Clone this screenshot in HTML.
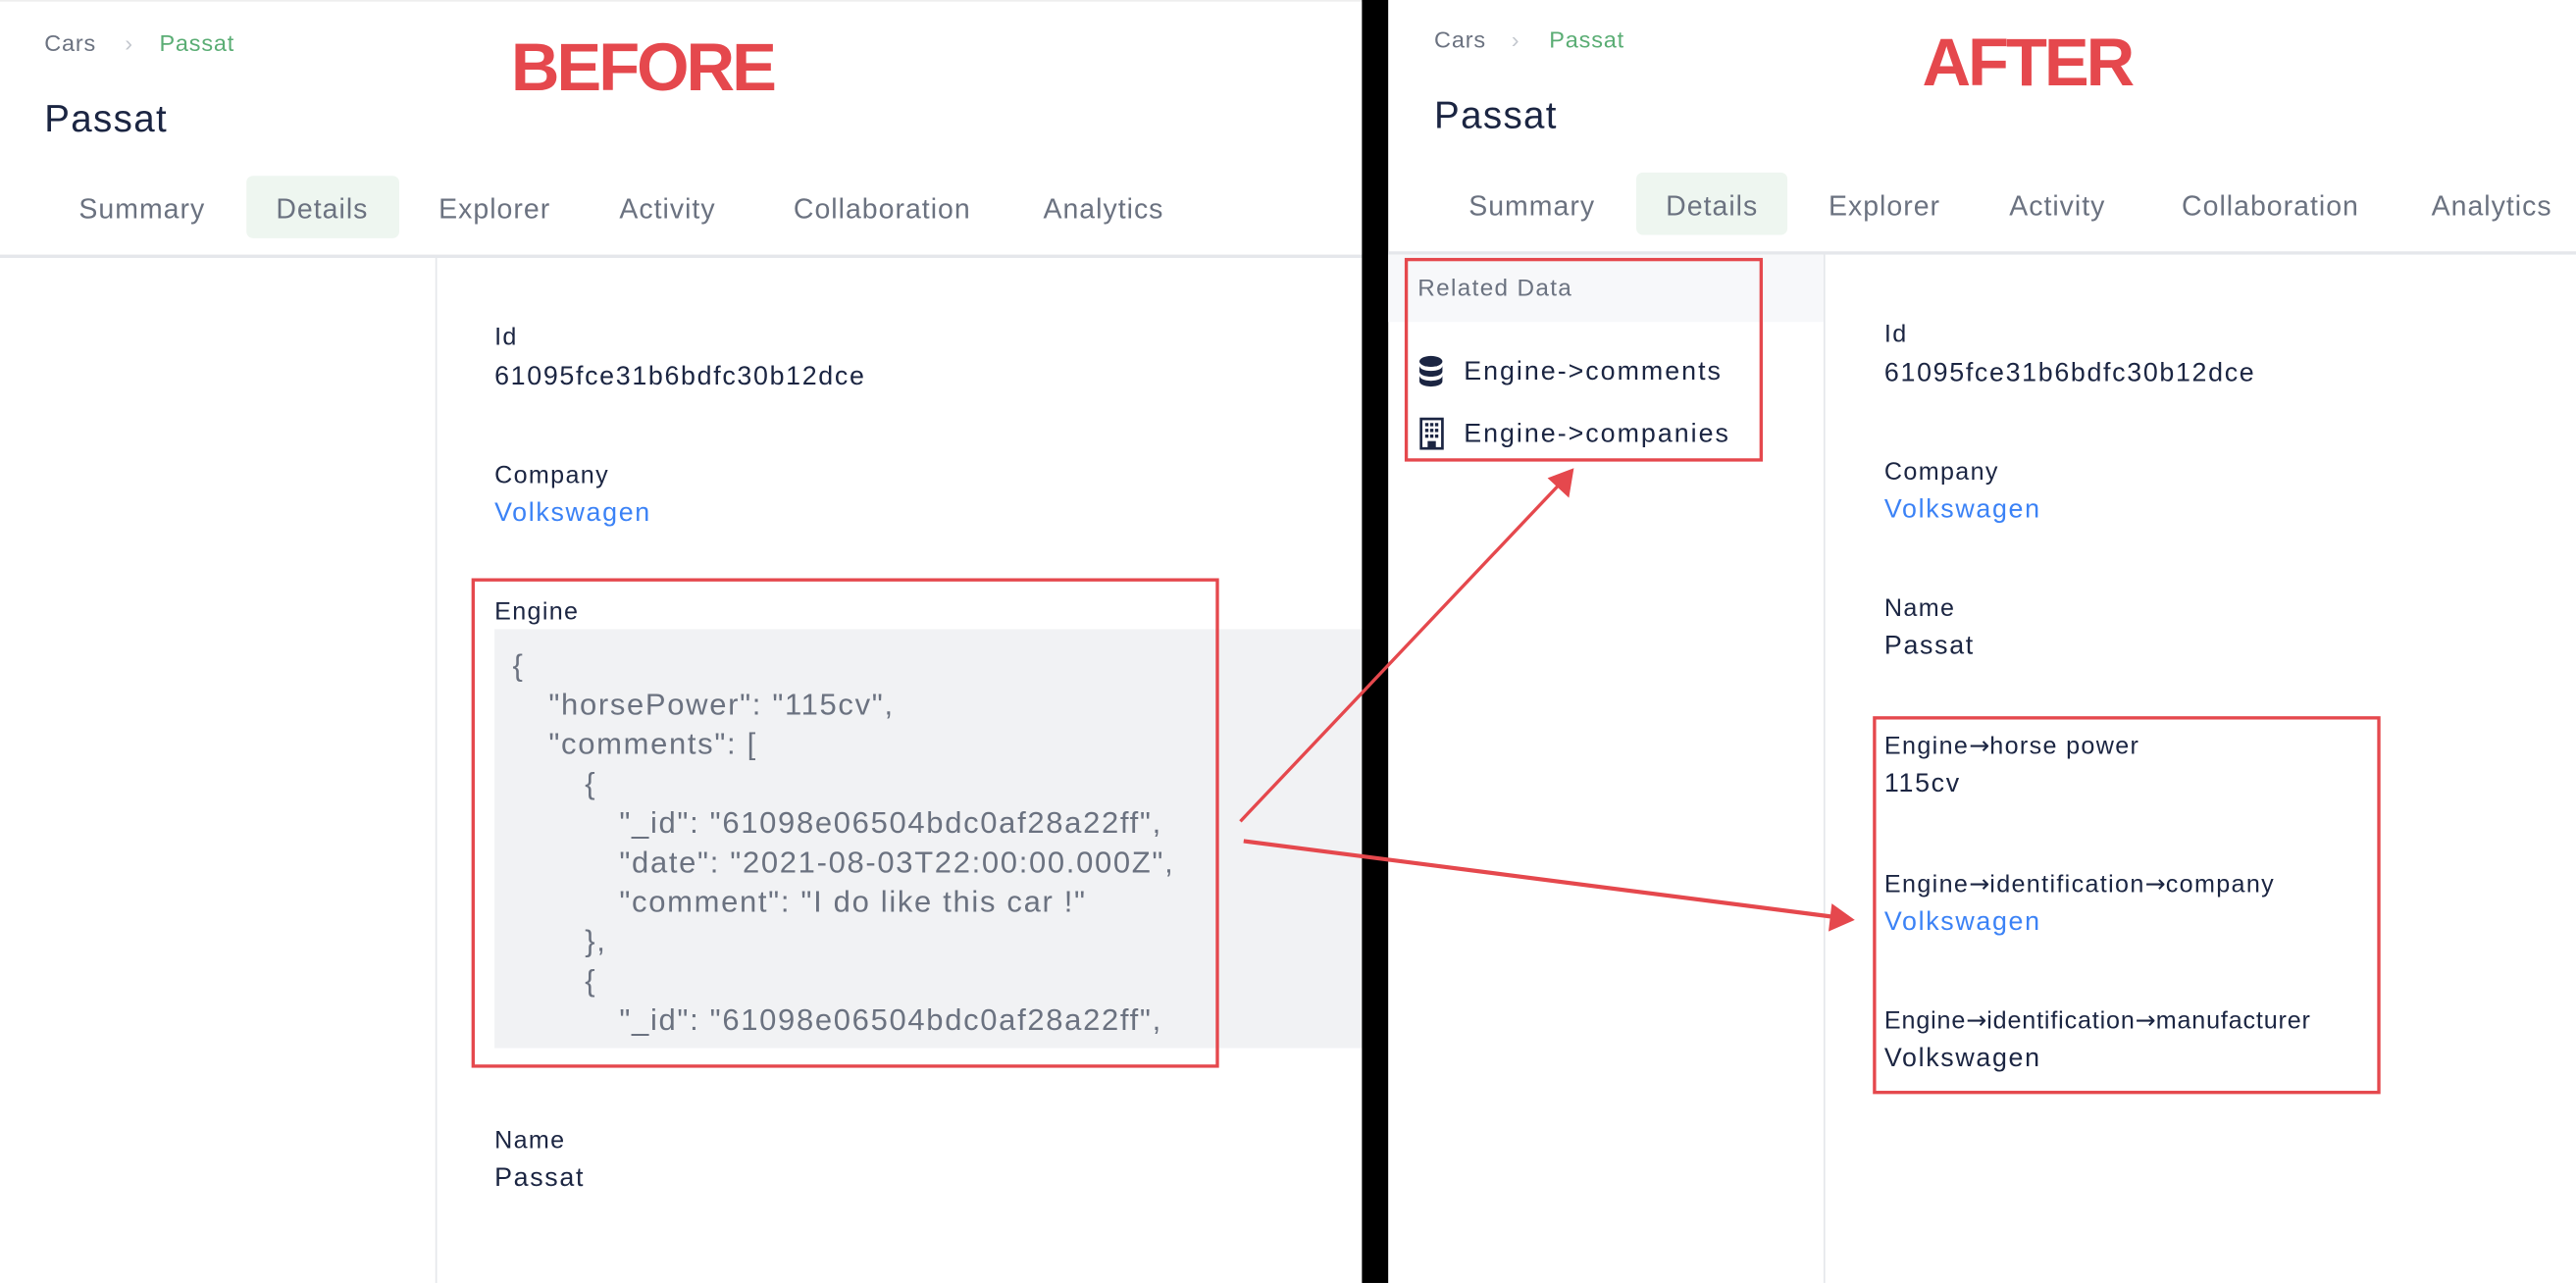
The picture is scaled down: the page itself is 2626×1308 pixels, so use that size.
<!DOCTYPE html>
<html><head><meta charset="utf-8"><style>
*{margin:0;padding:0;box-sizing:border-box}
html,body{width:2626px;height:1308px;overflow:hidden;background:#fff}
#w{position:absolute;left:0;top:0;width:1568px;height:781px;transform:scale(1.67474);transform-origin:0 0;font-family:"Liberation Sans",sans-serif}
.t{position:absolute;white-space:nowrap;line-height:23px}
.bc{font-size:14px;color:#6b7280;letter-spacing:0.5px}
.g{color:#5aad74}
.title{font-size:23px;color:#1b2542;line-height:32px;letter-spacing:0.8px}
.tab{font-size:17px;color:#6b7280;letter-spacing:0.6px}
.lab{font-size:15px;color:#1b2542;letter-spacing:0.8px}
.val{font-size:16px;color:#1b2542;letter-spacing:1px}
.blue{color:#3b82f6}
.code{font-size:18.5px;color:#6b7280;letter-spacing:1px}
.big{font-size:41px;font-weight:bold;color:#e5484d;line-height:46px;letter-spacing:-1.8px}
.box{position:absolute;border:2px solid #e5484d}
.ar{font-family:"DejaVu Sans",sans-serif;font-size:15px;letter-spacing:0}
</style></head><body><div id="w">
<!-- LEFT -->
<div style="position:absolute;left:0;top:0;width:829px;height:1px;background:#eee"></div>
<div class="t bc" style="left:27px;top:15px">Cars</div>
<div class="t bc" style="left:76px;top:15px;color:#c4c8cf">›</div>
<div class="t bc g" style="left:97px;top:15px">Passat</div>
<div class="t title" style="left:27px;top:56px">Passat</div>
<div class="t big" style="left:311px;top:18px">BEFORE</div>
<div style="position:absolute;left:150px;top:107px;width:93px;height:38px;background:#eef6f0;border-radius:4px"></div>
<div class="t tab" style="left:48px;top:116px">Summary</div>
<div class="t tab g" style="left:168px;top:116px">Details</div>
<div class="t tab" style="left:267px;top:116px">Explorer</div>
<div class="t tab" style="left:377px;top:116px">Activity</div>
<div class="t tab" style="left:483px;top:116px">Collaboration</div>
<div class="t tab" style="left:635px;top:116px">Analytics</div>
<div style="position:absolute;left:0;top:155px;width:829px;height:2px;background:#e5e7eb"></div>
<div style="position:absolute;left:265px;top:156px;width:1px;height:625px;background:#e5e7eb"></div>
<div class="t lab" style="left:301px;top:194px">Id</div>
<div class="t val" style="left:301px;top:218px">61095fce31b6bdfc30b12dce</div>
<div class="t lab" style="left:301px;top:278px">Company</div>
<div class="t val blue" style="left:301px;top:301px">Volkswagen</div>
<div class="t lab" style="left:301px;top:361px">Engine</div>
<div style="position:absolute;left:301px;top:383px;width:528px;height:255px;background:#f1f2f4;overflow:hidden">
<div class="t code" style="left:11px;top:10px">{</div>
<div class="t code" style="left:33px;top:34px">"horsePower": "115cv",</div>
<div class="t code" style="left:33px;top:58px">"comments": [</div>
<div class="t code" style="left:55px;top:82px">{</div>
<div class="t code" style="left:76px;top:106px">"_id": "61098e06504bdc0af28a22ff",</div>
<div class="t code" style="left:76px;top:130px">"date": "2021-08-03T22:00:00.000Z",</div>
<div class="t code" style="left:76px;top:154px">"comment": "I do like this car !"</div>
<div class="t code" style="left:55px;top:178px">},</div>
<div class="t code" style="left:55px;top:202px">{</div>
<div class="t code" style="left:76px;top:226px">"_id": "61098e06504bdc0af28a22ff",</div>
<div class="t code" style="left:76px;top:250px">"date": "2021-08-03T22:00:00.000Z",</div>
</div>
<div class="box" style="left:287px;top:352px;width:455px;height:298px"></div>
<div class="t lab" style="left:301px;top:683px">Name</div>
<div class="t val" style="left:301px;top:706px">Passat</div>
<!-- DIVIDER -->
<div style="position:absolute;left:829px;top:0;width:16px;height:781px;background:#000"></div>
<!-- RIGHT -->
<div class="t bc" style="left:873px;top:13px">Cars</div>
<div class="t bc" style="left:920px;top:13px;color:#c4c8cf">›</div>
<div class="t bc g" style="left:943px;top:13px">Passat</div>
<div class="t title" style="left:873px;top:54px">Passat</div>
<div class="t big" style="left:1170px;top:15px">AFTER</div>
<div style="position:absolute;left:996px;top:105px;width:92px;height:38px;background:#eef6f0;border-radius:4px"></div>
<div class="t tab" style="left:894px;top:114px">Summary</div>
<div class="t tab g" style="left:1014px;top:114px">Details</div>
<div class="t tab" style="left:1113px;top:114px">Explorer</div>
<div class="t tab" style="left:1223px;top:114px">Activity</div>
<div class="t tab" style="left:1328px;top:114px">Collaboration</div>
<div class="t tab" style="left:1480px;top:114px">Analytics</div>
<div style="position:absolute;left:845px;top:153px;width:723px;height:2px;background:#e5e7eb"></div>
<div style="position:absolute;left:1110px;top:154px;width:1px;height:627px;background:#e5e7eb"></div>
<div style="position:absolute;left:845px;top:155px;width:265px;height:41px;background:#f7f8fa"></div>
<div class="t bc" style="left:863px;top:165px;font-size:14.5px;letter-spacing:0.8px">Related Data</div>
<svg style="position:absolute;left:863px;top:216px" width="18" height="20" viewBox="0 0 18 20"><ellipse cx="8" cy="4" rx="7" ry="3.3" fill="#1b2542"/><path d="M1 6.5c0 2 3 3.3 7 3.3s7-1.3 7-3.3v3.5c0 2-3 3.3-7 3.3s-7-1.3-7-3.3z" fill="#1b2542"/><path d="M1 12.5c0 2 3 3.3 7 3.3s7-1.3 7-3.3v3.5c0 2-3 3.3-7 3.3s-7-1.3-7-3.3z" fill="#1b2542"/></svg>
<div class="t val" style="left:891px;top:215px;letter-spacing:1.2px">Engine-&gt;comments</div>
<svg style="position:absolute;left:864px;top:254px" width="16" height="20" viewBox="0 0 16 20"><rect x="1" y="1" width="13" height="18" fill="none" stroke="#1b2542" stroke-width="1.6"/><g fill="#1b2542"><rect x="3.5" y="3.5" width="2" height="2"/><rect x="6.5" y="3.5" width="2" height="2"/><rect x="9.5" y="3.5" width="2" height="2"/><rect x="3.5" y="7" width="2" height="2"/><rect x="6.5" y="7" width="2" height="2"/><rect x="9.5" y="7" width="2" height="2"/><rect x="3.5" y="10.5" width="2" height="2"/><rect x="6.5" y="10.5" width="2" height="2"/><rect x="9.5" y="10.5" width="2" height="2"/><rect x="5" y="14.5" width="5" height="4.5"/></g></svg>
<div class="t val" style="left:891px;top:253px;letter-spacing:1.2px">Engine-&gt;companies</div>
<div class="box" style="left:855px;top:157px;width:218px;height:124px"></div>
<div class="t lab" style="left:1147px;top:192px">Id</div>
<div class="t val" style="left:1147px;top:216px">61095fce31b6bdfc30b12dce</div>
<div class="t lab" style="left:1147px;top:276px">Company</div>
<div class="t val blue" style="left:1147px;top:299px">Volkswagen</div>
<div class="t lab" style="left:1147px;top:359px">Name</div>
<div class="t val" style="left:1147px;top:382px">Passat</div>
<div class="t lab" style="left:1147px;top:443px">Engine<span class="ar">→</span>horse power</div>
<div class="t val" style="left:1147px;top:466px">115cv</div>
<div class="t lab" style="left:1147px;top:527px">Engine<span class="ar">→</span>identification<span class="ar">→</span>company</div>
<div class="t val blue" style="left:1147px;top:550px">Volkswagen</div>
<div class="t lab" style="left:1147px;top:610px;letter-spacing:0.5px">Engine<span class="ar">→</span>identification<span class="ar">→</span>manufacturer</div>
<div class="t val" style="left:1147px;top:633px">Volkswagen</div>
<div class="box" style="left:1140px;top:436px;width:309px;height:230px"></div>
<!-- ARROWS -->
<svg style="position:absolute;left:0;top:0" width="1568" height="781">
<line x1="755" y1="500" x2="950" y2="294" stroke="#e5484d" stroke-width="2"/>
<polygon points="958,285 955,303 942,291" fill="#e5484d"/>
<line x1="757" y1="512" x2="1115" y2="558" stroke="#e5484d" stroke-width="2.5"/>
<polygon points="1129,560 1113,567 1115,550" fill="#e5484d"/>
</svg>
</div></body></html>
